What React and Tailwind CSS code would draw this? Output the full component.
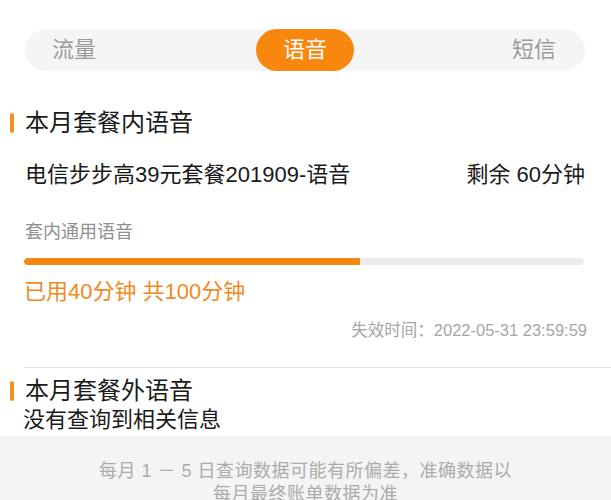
export default function App() {
  const font = { fontFamily: '"Liberation Sans", "Noto Sans CJK SC", sans-serif' };
  return (
    <div className="w-[611px] h-[500px] overflow-hidden bg-white flex flex-col" style={font}>
      <div className="shrink-0 pt-[29px] pl-[25px] pr-[26px]">
        <div className="h-[42px] rounded-full bg-[#f5f5f5] grid grid-cols-[1fr_98px_1fr] items-center">
          <div className="pl-[27px] text-[22px] text-[#9a9a9a] leading-none">流量</div>
          <div className="h-[42px] rounded-full bg-[#f7870f] flex items-center justify-center text-[22px] text-white leading-none">语音</div>
          <div className="flex justify-end pr-[29px] text-[22px] text-[#9a9a9a] leading-none">短信</div>
        </div>
      </div>

      <div className="shrink-0 mt-[36px] flex items-center">
        <div className="ml-[10px] w-[4px] h-[20px] rounded-full bg-[#f5901e]"></div>
        <div className="ml-[11px] text-[24px] leading-[32px] text-[#1a1a1a]">本月套餐内语音</div>
      </div>

      <div className="shrink-0 mt-[22px] pl-[25px] pr-[26px] flex items-center justify-between">
        <div className="text-[22px] leading-[28px] text-[#1a1a1a]">电信步步高39元套餐201909-语音</div>
        <div className="text-[22px] leading-[28px] text-[#1a1a1a]">剩余 60分钟</div>
      </div>

      <div className="shrink-0 mt-[31px] pl-[25px] text-[18px] leading-[24px] text-[#8f8f8f]">套内通用语音</div>

      <div className="shrink-0 mt-[14px] ml-[24px] mr-[27px] h-[7px] rounded-full bg-[#ececec] overflow-hidden">
        <div className="h-full bg-[#f7870f] rounded-l-full" style={{ width: '60%' }}></div>
      </div>

      <div className="shrink-0 mt-[13px] pl-[24px] text-[22px] leading-[28px] text-[#f08a1e]">已用40分钟 共100分钟</div>

      <div className="shrink-0 mt-[14px] pr-[24px] flex justify-end text-[16.5px] leading-[20px] text-[#a6a6a6]">失效时间：2022-05-31 23:59:59</div>

      <div className="shrink-0 mt-[27px] ml-[24px] h-px bg-[#e3e3e3]"></div>

      <div className="shrink-0 mt-[8px] flex items-center">
        <div className="ml-[10px] w-[4px] h-[20px] rounded-full bg-[#f5901e]"></div>
        <div className="ml-[11px] text-[24px] leading-[30px] text-[#1a1a1a]">本月套餐外语音</div>
      </div>
      <div className="shrink-0 pl-[23px] text-[22px] leading-[28px] text-[#1a1a1a]">没有查询到相关信息</div>

      <div className="shrink-0 mt-[2px] h-[200px] bg-[#f4f4f4] pt-[24px] flex flex-col items-center text-[18px] leading-[23px] text-[#ababab]">
        <div className="tracking-[0.5px]">每月 1 － 5 日查询数据可能有所偏差，准确数据以</div>
        <div className="tracking-[0.5px]">每月最终账单数据为准</div>
      </div>
    </div>
  );
}
